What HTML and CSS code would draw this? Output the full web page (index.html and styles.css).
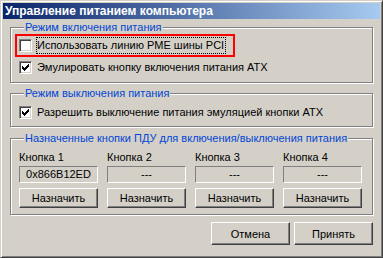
FILE: index.html
```html
<!DOCTYPE html>
<html lang="ru">
<head>
    <meta charset="UTF-8">
    <title>Управление питанием компьютера</title>
    <link rel="stylesheet" href="styles.css">
</head>
<body>
    <div class="window">
        <div class="titlebar">Управление питанием компьютера</div>
        <div class="content">
            <fieldset class="group group-on">
                <legend>Режим включения питания</legend>
                <label class="check highlight">
                    <span class="box"></span>
                    <span class="text focused">Использовать линию PME шины PCI</span>
                </label>
                <label class="check">
                    <span class="box">
                        <svg width="7" height="7" viewBox="0 0 7 7"><path d="M0 2h1v3H0zM1 3h1v3H1zM2 4h1v3H2zM3 3h1v3H3zM4 2h1v3H4zM5 1h1v3H5zM6 0h1v3H6z" fill="#000"/></svg>
                    </span>
                    <span class="text">Эмулировать кнопку включения питания ATX</span>
                </label>
            </fieldset>

            <fieldset class="group group-off">
                <legend>Режим выключения питания</legend>
                <label class="check">
                    <span class="box">
                        <svg width="7" height="7" viewBox="0 0 7 7"><path d="M0 2h1v3H0zM1 3h1v3H1zM2 4h1v3H2zM3 3h1v3H3zM4 2h1v3H4zM5 1h1v3H5zM6 0h1v3H6z" fill="#000"/></svg>
                    </span>
                    <span class="text">Разрешить выключение питания эмуляцией кнопки ATX</span>
                </label>
            </fieldset>

            <fieldset class="group group-keys">
                <legend>Назначенные кнопки ПДУ для включения/выключения питания</legend>
                <div class="keys">
                    <div class="key">
                        <span class="key-label">Кнопка 1</span>
                        <div class="field">0x866B12ED</div>
                        <button class="btn">Назначить</button>
                    </div>
                    <div class="key">
                        <span class="key-label">Кнопка 2</span>
                        <div class="field">---</div>
                        <button class="btn">Назначить</button>
                    </div>
                    <div class="key">
                        <span class="key-label">Кнопка 3</span>
                        <div class="field">---</div>
                        <button class="btn">Назначить</button>
                    </div>
                    <div class="key">
                        <span class="key-label">Кнопка 4</span>
                        <div class="field">---</div>
                        <button class="btn">Назначить</button>
                    </div>
                </div>
            </fieldset>

            <div class="actions">
                <button class="btn btn-dialog">Отмена</button>
                <button class="btn btn-dialog">Принять</button>
            </div>
        </div>
    </div>
</body>
</html>
```
FILE: styles.css
```css
* {
    margin: 0;
    padding: 0;
    box-sizing: border-box;
    font-family: 'Liberation Sans', Arial, sans-serif;
}

:root {
    --face: #d4d0c8;
    --shadow: #808080;
    --dark: #404040;
    --legend: #0046d5;
}

body {
    background: var(--face);
    font-size: 11px;
    color: #000;
}

.window {
    width: 383px;
    height: 258px;
    border: 1px solid;
    border-color: var(--face) var(--dark) var(--dark) var(--face);
    box-shadow: inset 1px 1px #fff, inset -1px -1px var(--shadow);
    padding: 2px;
}

.titlebar {
    height: 16px;
    padding-left: 2px;
    background: linear-gradient(to right, #0a246a, #a6caf0);
    color: #fff;
    font-weight: bold;
    font-size: 12px;
    line-height: 16px;
    white-space: nowrap;
}

.content {
    padding: 2px 7px 0;
}

.group {
    border: 1px solid var(--shadow);
    box-shadow: inset 1px 1px #fff, 1px 1px #fff;
    padding: 0 8px;
}

.group legend {
    margin-left: 5px;
    padding: 0 1px;
    color: var(--legend);
    background: var(--face);
    line-height: 13px;
    white-space: nowrap;
}

.group-on {
    padding-top: 3px;
    padding-bottom: 6px;
    margin-bottom: 4px;
    display: flex;
    flex-direction: column;
    align-items: flex-start;
    gap: 5px;
}

.group-off {
    padding-top: 4px;
    padding-bottom: 5px;
    margin-bottom: 5px;
}

.check {
    display: flex;
    align-items: center;
    height: 17px;
    gap: 4px;
    white-space: nowrap;
}

.highlight {
    position: relative;
}

.highlight::after {
    content: '';
    position: absolute;
    left: -4px;
    right: -9px;
    top: -3px;
    bottom: -3px;
    border: 2px solid #ff0000;
}

.box {
    width: 13px;
    height: 13px;
    flex: none;
    background: #fff;
    border: 1px solid;
    border-color: var(--shadow) #fff #fff var(--shadow);
    box-shadow: inset 1px 1px var(--dark), inset -1px -1px var(--face);
    padding: 2px;
    display: flex;
}

.box svg {
    display: block;
}

.text {
    line-height: 15px;
    padding-right: 1px;
    border: 1px dotted transparent;
}

.text.focused {
    border-color: #000;
}

.group-keys {
    padding-top: 6px;
    padding-bottom: 6px;
}

.keys {
    display: grid;
    grid-template-columns: repeat(4, 79px);
    column-gap: 9px;
}

.key {
    display: flex;
    flex-direction: column;
}

.key-label {
    line-height: 13px;
    margin-bottom: 2px;
    white-space: nowrap;
}

.field {
    height: 17px;
    border: 1px solid;
    border-color: var(--shadow) #fff #fff var(--shadow);
    text-align: center;
    line-height: 15px;
    margin-bottom: 5px;
}

.btn {
    height: 20px;
    background: var(--face);
    border: 1px solid;
    border-color: #fff var(--dark) var(--dark) #fff;
    box-shadow: inset -1px -1px var(--shadow);
    font-size: 11px;
    color: #000;
}

.actions {
    display: flex;
    justify-content: flex-end;
    gap: 4px;
    margin-top: 7px;
}

.btn-dialog {
    width: 79px;
    height: 23px;
}
```
